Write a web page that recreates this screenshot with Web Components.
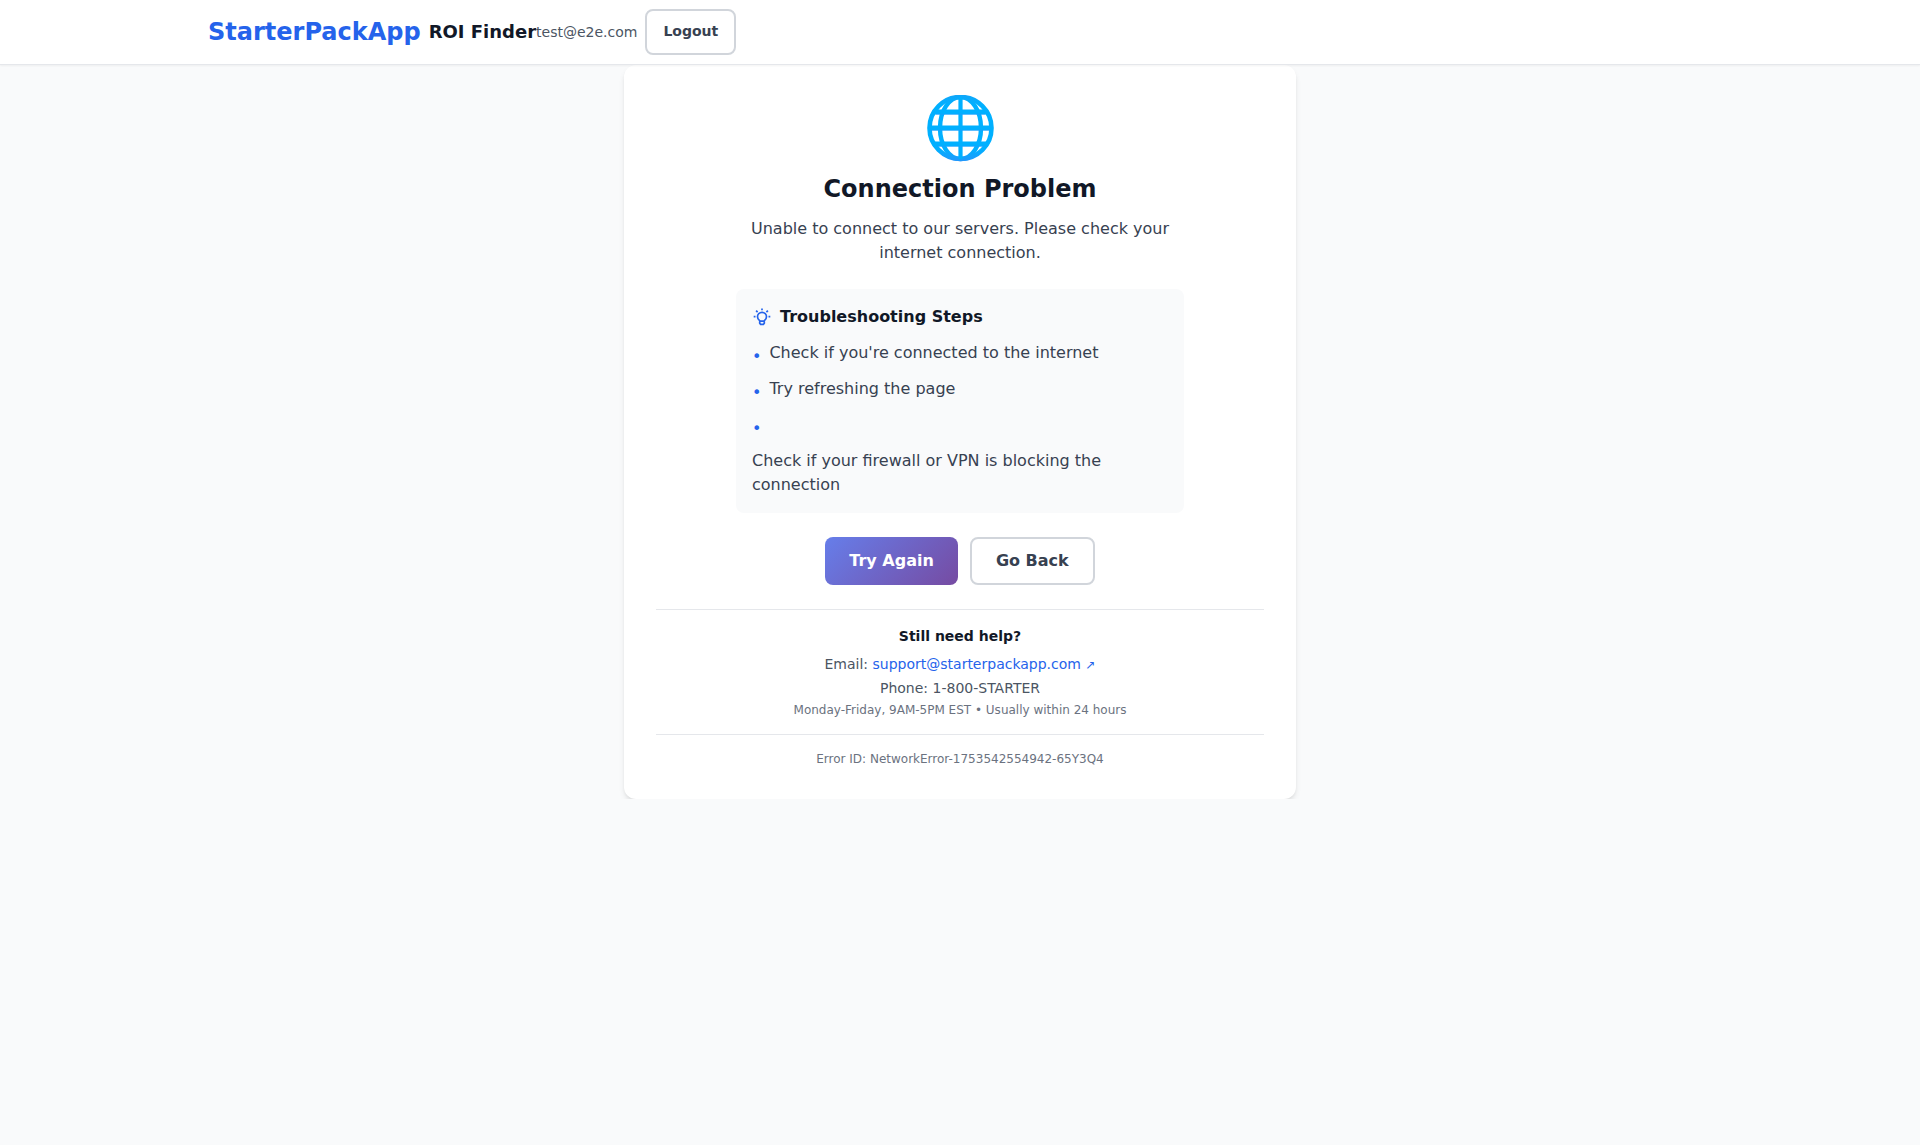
<!DOCTYPE html>
<html lang="en">
<head>
<meta charset="utf-8">
<title>ROI Finder</title>
<style>
body{margin:0;background:#f9fafb;color:#111827;font:16px/24px "DejaVu Sans",sans-serif}
</style>
</head>
<body>
<roi-app></roi-app>
<script>
const define = (name, html) => {
  const t = document.createElement('template');
  t.innerHTML = '<style>*{box-sizing:border-box}h1,h2,h3,p{margin:0;padding:0;font-size:inherit;font-weight:400}</style>' + html;
  customElements.define(name, class extends HTMLElement {
    constructor() {
      super();
      this.attachShadow({mode: 'open'}).append(t.content.cloneNode(true));
    }
  });
};

define('app-button', `
<style>
:host{display:block}
button{display:block;font:bold 16px/24px "DejaVu Sans",sans-serif;padding:10px 24px;border:2px solid #d1d5db;border-radius:8px;background:#fff;color:#374151;cursor:pointer}
:host([variant=primary]) button{border:0;padding:12px 24px;color:#fff;background:linear-gradient(135deg,#667eea,#764ba2)}
:host([size=small]) button{font-size:14px;line-height:20px;padding:10px 16px 12px}
</style>
<button type="button"><slot></slot></button>`);

define('app-header', `
<style>
:host{display:block;position:relative;background:#fff;border-bottom:1px solid #e5e7eb;box-shadow:0 1px 2px rgba(0,0,0,.05)}
header{max-width:1536px;min-height:64px;margin:0 auto;padding:0 16px;display:flex;align-items:center}
.brand,.user{display:flex;align-items:center;gap:8px}
a{font-size:24px;line-height:32px;font-weight:700;color:#2563eb;text-decoration:none}
h1{font-size:18px;line-height:28px;font-weight:700}
.user span{font-size:14px;line-height:20px;color:#4b5563}
</style>
<header>
<div class="brand"><a href="#">StarterPackApp</a><h1>ROI Finder</h1></div>
<div class="user"><span><slot name="user"></slot></span><app-button size="small">Logout</app-button></div>
</header>`);

define('globe-icon', `
<style>
:host{display:flex;justify-content:center;align-items:center;height:64px}
svg{flex:none;display:block;width:68px;height:68px}
</style>
<svg viewBox="0 0 68 68" fill="none" stroke="url(#g)" aria-hidden="true">
<defs><linearGradient id="g" gradientUnits="userSpaceOnUse" x1="0" y1="0" x2="0" y2="68"><stop offset="0" stop-color="#10a6fa"/><stop offset=".15" stop-color="#00b0ff"/><stop offset=".8" stop-color="#00b0ff"/><stop offset="1" stop-color="#2793fb"/></linearGradient></defs>
<circle cx="34.500" cy="33" r="31" stroke-width="4.600"/>
<ellipse cx="34.500" cy="33" rx="20.500" ry="31" stroke-width="4.400"/>
<path d="M7 17H62M2.500 33H66.500M7 49H62" stroke="#00b0ff" stroke-width="5"/>
<path d="M34.500 2V64" stroke="#00b0ff" stroke-width="4.200"/>
<path d="M10 19.300H59M5 35.300H64M10 51.300H59" stroke="#2793fb" stroke-width=".8" opacity=".6"/>
</svg>`);

define('bulb-icon', `
<style>:host{display:block;width:20px;height:20px;color:#2563eb}svg{display:block}</style>
<svg width="20" height="20" viewBox="0 0 20 20" fill="none" stroke="currentColor" stroke-width="1.700" aria-hidden="true">
<path d="M7.700 13.700C6.300 12.800 5.500 11.500 5.500 9.800a4.500 4.500 0 0 1 9 0c0 1.700-.8 3-2.200 3.900V16.200l-.9 1.100H8.600l-.9-1.100zM7.700 14.200h4.600"/>
<path d="M10 1.500V3.300M1.700 9.700H3.500M16.500 9.700h1.800M4.100 3.700l1.500 1.500M15.900 3.700l-1.500 1.500"/>
</svg>`);

define('step-item', `
<style>
:host{display:flex;flex-wrap:wrap;column-gap:8px;row-gap:12px;color:#374151}
.bullet{flex:none;height:24px;padding-top:4px;color:#2563eb}
</style>
<span class="bullet">•</span><span><slot></slot></span>`);

define('trouble-steps', `
<style>
:host{display:block;background:#f9fafb;border-radius:8px;padding:16px}
section,.list{display:flex;flex-direction:column;gap:12px}
.title{display:flex;align-items:center;gap:8px}
h3{font-weight:700}
</style>
<section><div class="title"><bulb-icon></bulb-icon><h3>Troubleshooting Steps</h3></div>
<div class="list" role="list"><slot></slot></div></section>`);

define('support-info', `
<style>
:host{display:flex;flex-direction:column;gap:4px;padding:16px 0;border-top:1px solid #e5e7eb;font-size:14px;line-height:20px;color:#4b5563}
h3{font-weight:700;color:#111827;margin-bottom:4px}
a{color:#2563eb;text-decoration:none}
a span,small{font-size:12px;line-height:16px}
a span{line-height:1}
small{color:#6b7280}
</style>
<h3>Still need help?</h3>
<p>Email: <a href="mailto:support@starterpackapp.com">support@starterpackapp.com <span>↗</span></a></p>
<p>Phone: 1-800-STARTER</p>
<small>Monday-Friday, 9AM-5PM EST • Usually within 24 hours</small>`);

define('error-card', `
<style>
:host{display:block;max-width:672px;margin:0 auto;padding:32px;background:#fff;border-radius:12px;text-align:center;box-shadow:0 4px 6px -1px rgba(0,0,0,.1),0 2px 4px -2px rgba(0,0,0,.1)}
.body{max-width:448px;margin:0 auto}
h2{font-size:24px;line-height:32px;font-weight:700;margin:12px 0}
p{color:#374151}
trouble-steps{text-align:left;margin:24px 0}
.actions{display:flex;justify-content:center;gap:12px;margin-bottom:24px}
footer{border-top:1px solid #e5e7eb;padding-top:16px;font-size:12px;line-height:16px;color:#6b7280}
</style>
<div class="body">
<globe-icon></globe-icon>
<h2>Connection Problem</h2>
<p>Unable to connect to our servers. Please check your internet connection.</p>
<trouble-steps>
<step-item role="listitem">Check if you're connected to the internet</step-item>
<step-item role="listitem">Try refreshing the page</step-item>
<step-item role="listitem">Check if your firewall or VPN is blocking the connection</step-item>
</trouble-steps>
<div class="actions"><app-button variant="primary">Try Again</app-button><app-button>Go Back</app-button></div>
</div>
<support-info></support-info>
<footer>Error ID: NetworkError-1753542554942-65Y3Q4</footer>`);

define('roi-app', `
<style>
:host{display:block}
main{overflow:hidden}
</style>
<app-header><span slot="user">test@e2e.com</span></app-header>
<main><error-card></error-card></main>`);
</script>
</body>
</html>
